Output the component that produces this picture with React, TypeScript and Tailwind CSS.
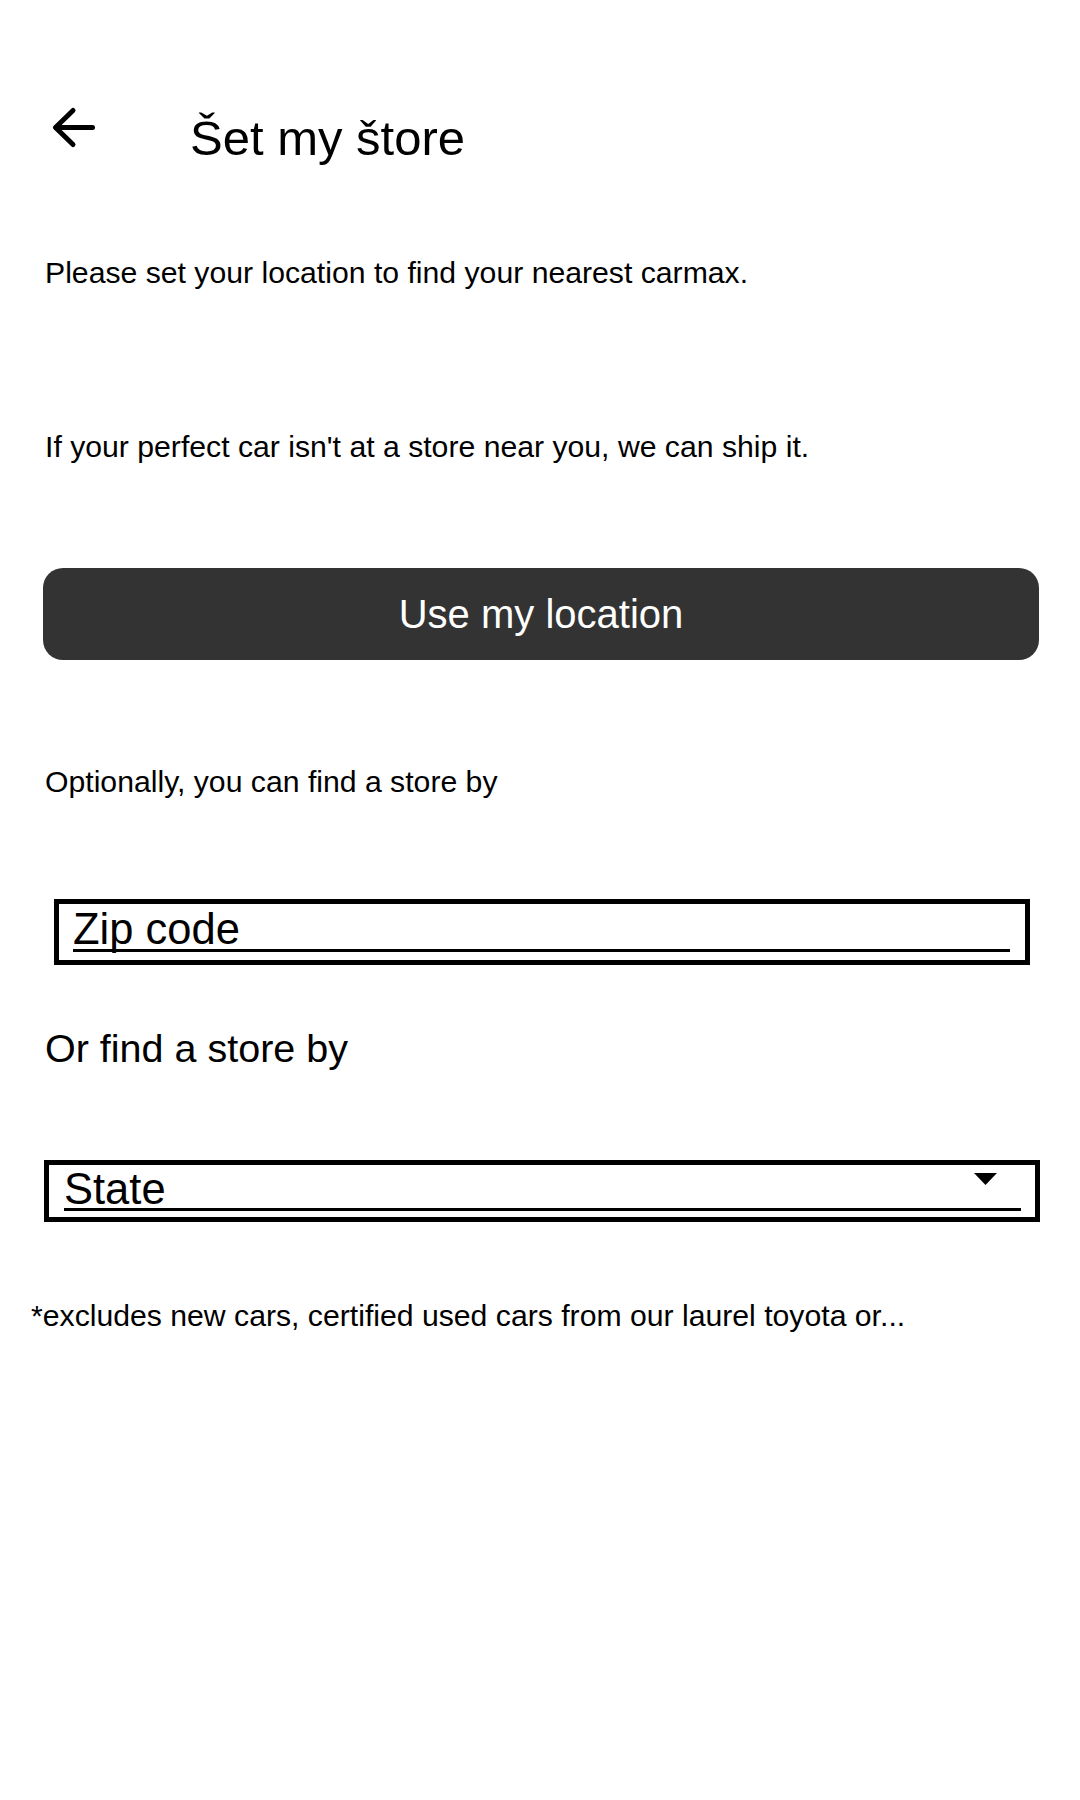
import React from "react";

export default function App() {
  return (
    <div
      className="w-[1080px] h-[1800px] bg-white text-black flex flex-col"
      style={{ fontFamily: '"Liberation Sans", Arial, sans-serif' }}
    >
      {/* Header */}
      <div className="flex items-start pl-[51px] pt-[106px]">
        <svg
          width="46"
          height="43"
          viewBox="0 0 46 43"
          fill="none"
          stroke="#000"
          strokeWidth="5"
          strokeLinecap="round"
          strokeLinejoin="round"
          className="block shrink-0"
        >
          <path d="M41.5 21.5 H5" />
          <path d="M22 4.5 L4.5 21.5 L22 38.5" />
        </svg>
        <h1 className="ml-[93px] mt-[8px] text-[49px] leading-none font-normal">
          Šet my štore
        </h1>
      </div>

      <p className="mt-[95px] pl-[45px] text-[30.2px] leading-none">
        Please set your location to find your nearest carmax.
      </p>

      <p className="mt-[144px] pl-[45px] text-[30.2px] leading-none">
        If your perfect car isn't at a store near you, we can ship it.
      </p>

      <div className="mt-[106px] ml-[43px] mr-[41px] h-[92px] rounded-[20px] bg-[#333333] flex items-center justify-center">
        <span className="text-white text-[40px] leading-none">Use my location</span>
      </div>

      <p className="mt-[107px] pl-[45px] text-[30.2px] leading-none">
        Optionally, you can find a store by
      </p>

      {/* Zip code */}
      <div className="mt-[101px] ml-[54px] w-[976px] h-[66px] border-[5px] border-black pt-[4px] pl-[14px] pr-[15px]">
        <div className="h-[44px] border-b-[3px] border-black">
          <span className="block text-[43.5px] leading-none h-[41px]">Zip code</span>
        </div>
      </div>

      <p className="mt-[64px] pl-[45px] text-[39.5px] leading-none">Or find a store by</p>

      {/* State */}
      <div className="mt-[92px] ml-[44px] w-[996px] h-[62px] border-[5px] border-black pt-[3px] pl-[15px] pr-[14px]">
        <div className="h-[43px] border-b-[3px] border-black flex items-start justify-between">
          <span className="block text-[43.5px] leading-none h-[40px]">State</span>
          <svg width="23" height="12" viewBox="0 0 23 12" className="mt-[5px] mr-[24px] block">
            <polygon points="0,0 23,0 11.5,12" fill="#000" />
          </svg>
        </div>
      </div>

      <p className="mt-[79px] pl-[31px] text-[30.2px] leading-none">
        *excludes new cars, certified used cars from our laurel toyota or...
      </p>
    </div>
  );
}
